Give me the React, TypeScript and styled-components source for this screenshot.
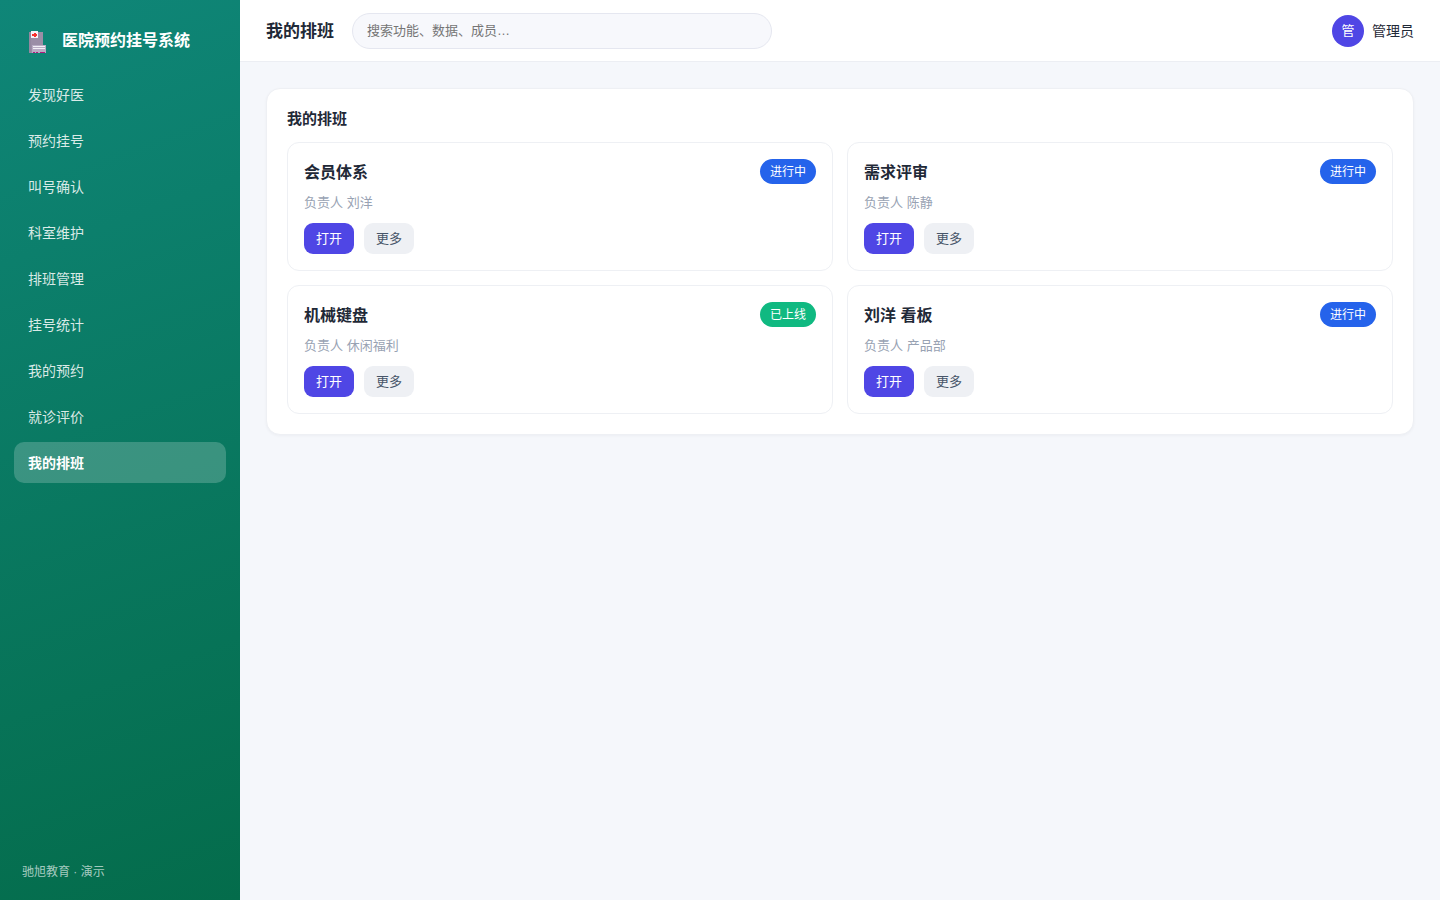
import React from "react";
import styled, { createGlobalStyle } from "styled-components";

const GlobalStyle = createGlobalStyle`
  *, *::before, *::after { box-sizing: border-box; }
  body {
    margin: 0;
    background: #f5f7fb;
    color: #1f2937;
    font-family: "Liberation Sans", "Noto Sans CJK SC", sans-serif;
    font-size: 14px;
    line-height: 21px;
  }
  h1, h2, h3, p, ul { margin: 0; padding: 0; }
  button, input { font-family: inherit; }
`;

const Shell = styled.div`
  display: flex;
  min-height: 100vh;
`;

const Sidebar = styled.aside`
  display: flex;
  flex-direction: column;
  flex: 0 0 240px;
  padding: 20px 14px;
  color: #fff;
  background: linear-gradient(160deg, #0f8678, #046c4b);
`;

const Brand = styled.div`
  display: flex;
  align-items: center;
  gap: 14px;
  height: 40px;
  padding: 0 14px;
  margin-bottom: 14px;
  font-size: 16px;
  font-weight: 700;
`;

const NavList = styled.ul`
  display: flex;
  flex-direction: column;
  gap: 5px;
  list-style: none;
`;

const NavLink = styled.a<{ $active: boolean }>`
  display: block;
  padding: 11px 14px 9px;
  border-radius: 10px;
  font-size: 14px;
  text-decoration: none;
  color: ${(p) => (p.$active ? "#fff" : "rgba(255, 255, 255, 0.85)")};
  font-weight: ${(p) => (p.$active ? 700 : 400)};
  background: ${(p) => (p.$active ? "rgba(255, 255, 255, 0.2)" : "transparent")};
`;

const SidebarFooter = styled.p`
  margin-top: auto;
  padding: 0 8px;
  font-size: 12px;
  line-height: 16px;
  color: rgba(255, 255, 255, 0.65);
`;

const Main = styled.div`
  flex: 1;
  min-width: 0;
`;

const Header = styled.header`
  display: flex;
  align-items: center;
  gap: 18px;
  height: 62px;
  padding: 0 26px;
  background: #fff;
  border-bottom: 1px solid #eceef3;
`;

const PageTitle = styled.h1`
  padding-top: 2px;
  font-size: 17px;
  font-weight: 700;
  white-space: nowrap;
`;

const SearchInput = styled.input`
  flex: 0 1 420px;
  min-width: 0;
  height: 36px;
  padding: 0 14px;
  border: 1px solid #e5e7f0;
  border-radius: 18px;
  background: #f7f8fc;
  font-size: 13px;
  color: #1f2937;
  &::placeholder { color: #757575; }
`;

const User = styled.div`
  display: flex;
  align-items: center;
  gap: 8px;
  margin-left: auto;
  white-space: nowrap;
`;

const UserName = styled.span`
  padding-top: 2px;
`;

const Avatar = styled.span`
  display: flex;
  align-items: center;
  justify-content: center;
  width: 32px;
  height: 32px;
  border-radius: 50%;
  background: #4f46e5;
  color: #fff;
  font-size: 13px;
`;

const Content = styled.main`
  padding: 26px;
`;

const Panel = styled.section`
  padding: 20px;
  border: 1px solid #eef0f4;
  border-radius: 14px;
  background: #fff;
  box-shadow: 0 1px 3px rgba(16, 24, 40, 0.04);
`;

const PanelTitle = styled.h2`
  margin-bottom: 14px;
  font-size: 15px;
  line-height: 19px;
  font-weight: 700;
`;

const CardGrid = styled.div`
  display: grid;
  grid-template-columns: repeat(2, minmax(0, 1fr));
  gap: 14px;
`;

const Card = styled.article`
  padding: 16px;
  border: 1px solid #eef0f4;
  border-radius: 12px;
`;

const CardHead = styled.div`
  display: flex;
  align-items: center;
  justify-content: space-between;
`;

const CardTitle = styled.h3`
  padding-top: 2px;
  font-size: 16px;
  line-height: 23px;
  font-weight: 700;
`;

const Badge = styled.span<{ $live: boolean }>`
  padding: 4px 10px 2px;
  border-radius: 13px;
  font-size: 12px;
  line-height: 19px;
  color: #fff;
  background: ${(p) => (p.$live ? "#10b981" : "#2563eb")};
`;

const Owner = styled.p`
  margin: 9px 0 11px;
  font-size: 13px;
  line-height: 19px;
  color: #98a2b3;
`;

const Actions = styled.div`
  display: flex;
  gap: 10px;
`;

const ActionButton = styled.button<{ $primary?: boolean }>`
  padding: 6px 12px;
  border: 0;
  border-radius: 9px;
  font-size: 13px;
  line-height: 19px;
  cursor: pointer;
  color: ${(p) => (p.$primary ? "#fff" : "#475569")};
  background: ${(p) => (p.$primary ? "#4f46e5" : "#eef0f4")};
`;

const HospitalIcon = () => (
  <svg width="20" height="28" viewBox="0 -4 20 28" aria-hidden="true" shapeRendering="crispEdges">
    <path fill="#9b8ea6" d="M1 2h14v21H1z" />
    <path fill="#9488a0" d="M1 2h2v21H1z" />
    <path fill="#f5f3f7" d="M3 1h7v7H3z" />
    <path fill="#f8312f" d="M6 3h2v1h1v2H8v1H6V6H4V4h2z" />
    <path fill="#b9adc4" d="M4 15h14v8H4z" />
    <path fill="#f3f0f6" d="M5 16h12v1H5zM5 18h12v1H5z" />
    <path fill="#b31b7c" d="M5 22h2v1H5zM8 22h2v1H8zM12 22h5v1h-5z" />
  </svg>
);

const navItems = [
  "发现好医", "预约挂号", "叫号确认", "科室维护", "排班管理",
  "挂号统计", "我的预约", "就诊评价", "我的排班",
];

const cards = [
  { title: "会员体系", owner: "刘洋", status: "进行中" },
  { title: "需求评审", owner: "陈静", status: "进行中" },
  { title: "机械键盘", owner: "休闲福利", status: "已上线" },
  { title: "刘洋 看板", owner: "产品部", status: "进行中" },
];

export default function App() {
  return (
    <>
      <GlobalStyle />
      <Shell lang="zh-CN">
        <Sidebar>
          <Brand>
            <HospitalIcon />
            <span>医院预约挂号系统</span>
          </Brand>
          <nav>
            <NavList>
              {navItems.map((item) => (
                <li key={item}>
                  <NavLink href="#" $active={item === "我的排班"}>{item}</NavLink>
                </li>
              ))}
            </NavList>
          </nav>
          <SidebarFooter>驰旭教育 · 演示</SidebarFooter>
        </Sidebar>
        <Main>
          <Header>
            <PageTitle>我的排班</PageTitle>
            <SearchInput type="search" aria-label="搜索" placeholder="搜索功能、数据、成员…" />
            <User>
              <Avatar>管</Avatar>
              <UserName>管理员</UserName>
            </User>
          </Header>
          <Content>
            <Panel>
              <PanelTitle>我的排班</PanelTitle>
              <CardGrid>
                {cards.map((card) => (
                  <Card key={card.title}>
                    <CardHead>
                      <CardTitle>{card.title}</CardTitle>
                      <Badge $live={card.status === "已上线"}>{card.status}</Badge>
                    </CardHead>
                    <Owner>负责人 {card.owner}</Owner>
                    <Actions>
                      <ActionButton type="button" $primary>打开</ActionButton>
                      <ActionButton type="button">更多</ActionButton>
                    </Actions>
                  </Card>
                ))}
              </CardGrid>
            </Panel>
          </Content>
        </Main>
      </Shell>
    </>
  );
}
